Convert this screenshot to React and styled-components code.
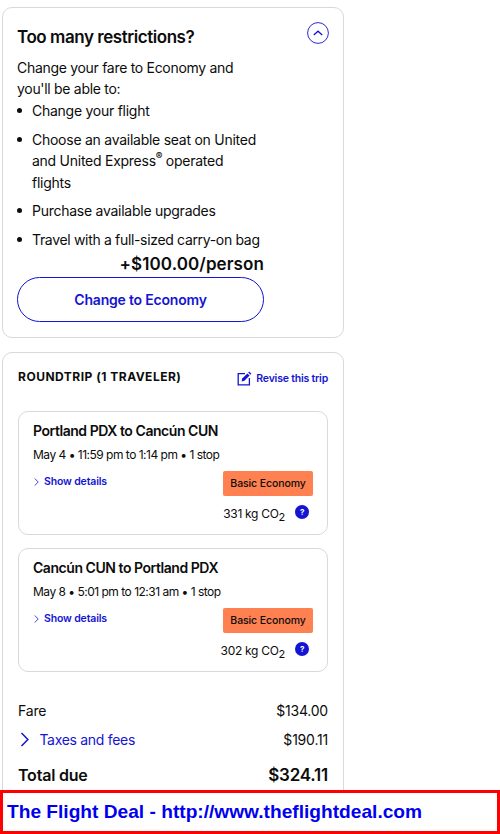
import React from 'react'
import styled, { createGlobalStyle } from 'styled-components'

const GlobalStyle = createGlobalStyle`
  html, body {
    margin: 0;
    height: 834px;
    overflow: hidden;
    background: #fff;
  }
  body {
    font-family: Inter, "Liberation Sans", sans-serif;
    color: #0c0c0c;
  }
`

function ChevronUpCircle() {
  return (
    <svg width="22" height="22" viewBox="0 0 22 22" fill="none" stroke="#1414d2">
      <circle cx="11" cy="11" r="10.4" strokeWidth="0.9" />
      <path d="M6.8 13 L11 9.2 L15.2 13" strokeWidth="1.3" />
    </svg>
  )
}

function EditIcon() {
  return (
    <svg width="15" height="15" viewBox="0 0 15 15" fill="none">
      <path d="M8 2.6H1.2v11.2h11.2V7" stroke="#1414d2" strokeWidth="1.3" />
      <path d="M4.6 10.4 L5.2 7.6 L10.4 2.4 L12.6 4.6 L7.4 9.8 Z" fill="#1414d2" />
      <path d="M11.2 1.6 L12.2 0.6 L14.4 2.8 L13.4 3.8 Z" fill="#1414d2" />
    </svg>
  )
}

function Chevron({ size = 8 }) {
  return (
    <svg width={size * 0.625} height={size} viewBox="0 0 5 8" fill="none" stroke="#1414d2" strokeWidth="0.8">
      <path d="M0.8 0.5 L4.2 4 L0.8 7.5" />
    </svg>
  )
}

function Flight({ route, times, co2 }) {
  return (
    <FlightCard>
      <Route>{route}</Route>
      <Times>{times}</Times>
      <FlightBottom>
        <DetailsLink><Chevron />Show details</DetailsLink>
        <FareColumn>
          <FareBadge>Basic Economy</FareBadge>
          <Emissions>
            <span>{co2} kg CO<Sub>2</Sub></span>
            <HelpDot>?</HelpDot>
          </Emissions>
        </FareColumn>
      </FlightBottom>
    </FlightCard>
  )
}

export default function App() {
  return (
    <Page>
      <GlobalStyle />
      <Card>
        <UpsellHead>
          <UpsellTitle>Too many restrictions?</UpsellTitle>
          <ChevronUpCircle />
        </UpsellHead>
        <Intro>Change your fare to Economy and<br />you'll be able to:</Intro>
        <Perks>
          <li>Change your flight</li>
          <li>Choose an available seat on United<br />and United Express<Reg>®</Reg> operated<br />flights</li>
          <li>Purchase available upgrades</li>
          <li>Travel with a full-sized carry-on bag</li>
        </Perks>
        <UpsellAction>
          <Price>+$100.00/person</Price>
          <PillButton>Change to Economy</PillButton>
        </UpsellAction>
      </Card>

      <TripCard>
        <TripHead>
          <TripTitle>ROUNDTRIP (1 TRAVELER)</TripTitle>
          <ReviseLink><EditIcon />Revise this trip</ReviseLink>
        </TripHead>
        <Flight route="Portland PDX to Cancún CUN" times="May 4 • 11:59 pm to 1:14 pm • 1 stop" co2="331" />
        <Flight route="Cancún CUN to Portland PDX" times="May 8 • 5:01 pm to 12:31 am • 1 stop" co2="302" />
        <Totals>
          <TotalRow><span>Fare</span><span>$134.00</span></TotalRow>
          <TotalRow>
            <TaxesLink><Chevron size={15} />Taxes and fees</TaxesLink>
            <span>$190.11</span>
          </TotalRow>
          <GrandRow><span>Total due</span><strong>$324.11</strong></GrandRow>
        </Totals>
      </TripCard>

      <Banner>The Flight Deal - http://www.theflightdeal.com</Banner>
    </Page>
  )
}

const Page = styled.div`
  width: 342px;
  height: 834px;
  padding: 7px 0 0 2px;
  box-sizing: content-box;
`
const Card = styled.section`
  box-sizing: border-box;
  height: 331px;
  padding: 14px 14px 0 14px;
  border: 1px solid #d9d9d9;
  border-radius: 10px;
  background: #fff;
`
const UpsellHead = styled.div`
  display: flex;
  justify-content: space-between;
  align-items: flex-start;
  height: 35px;
`
const UpsellTitle = styled.h2`
  margin: 4px 0 0;
  font-size: 17px;
  line-height: 22px;
  font-weight: 600;
  letter-spacing: -0.45px;
`
const Intro = styled.p`
  margin: 0 0 1px;
  font-size: 14px;
  line-height: 21px;
  letter-spacing: -0.3px;
`
const Perks = styled.ul`
  margin: 0;
  padding: 0 0 0 15px;
  list-style: none;
  font-size: 14px;
  line-height: 21.5px;
  letter-spacing: -0.26px;
  li {
    position: relative;
    margin-bottom: 7.2px;
  }
  li::before {
    content: '';
    position: absolute;
    left: -15px;
    top: 8px;
    width: 5px;
    height: 5px;
    border-radius: 50%;
    background: #0c0c0c;
  }
  li:last-child {
    margin-bottom: 0;
    letter-spacing: -0.33px;
  }
`
const Reg = styled.sup`
  font-size: 10px;
  font-weight: 600;
  line-height: 0;
`
const UpsellAction = styled.div`
  width: 247px;
  margin-top: 1px;
  display: flex;
  flex-direction: column;
  align-items: flex-end;
`
const Price = styled.div`
  font-size: 17px;
  line-height: 25px;
  font-weight: 600;
  letter-spacing: 0.1px;
`
const PillButton = styled.button`
  width: 100%;
  height: 45px;
  border: 1px solid #1414d2;
  border-radius: 23px;
  background: #fff;
  color: #1414d2;
  font-family: inherit;
  font-size: 14px;
  font-weight: 600;
  letter-spacing: -0.2px;
`
const TripCard = styled(Card)`
  height: 520px;
  margin-top: 14px;
  padding: 15px 15px 0;
`
const TripHead = styled.div`
  display: flex;
  justify-content: space-between;
  align-items: center;
  height: 20px;
  margin-bottom: 23px;
`
const TripTitle = styled.h3`
  margin: 0 0 4px;
  font-size: 12px;
  font-weight: 700;
  letter-spacing: 0.5px;
`
const ReviseLink = styled.a`
  display: flex;
  align-items: center;
  gap: 4px;
  color: #1414d2;
  font-size: 10.5px;
  font-weight: 600;
  letter-spacing: -0.2px;
`
const FlightCard = styled.article`
  box-sizing: border-box;
  height: 124px;
  margin-bottom: 13px;
  padding: 9px 14px 0 14px;
  border: 1px solid #d9d9d9;
  border-radius: 10px;
`
const Route = styled.div`
  font-size: 14px;
  line-height: 20px;
  font-weight: 600;
  letter-spacing: -0.45px;
`
const Times = styled.div`
  margin-top: 5px;
  font-size: 12px;
  line-height: 18px;
  letter-spacing: -0.5px;
`
const FlightBottom = styled.div`
  display: flex;
  justify-content: space-between;
  align-items: flex-start;
  margin-top: 7px;
`
const DetailsLink = styled.a`
  display: flex;
  align-items: center;
  gap: 5px;
  margin: 3px 0 0 1px;
  color: #1414d2;
  font-size: 10.5px;
  line-height: 16px;
  font-weight: 600;
  letter-spacing: -0.15px;
`
const FareColumn = styled.div`
  display: flex;
  flex-direction: column;
  align-items: flex-end;
`
const FareBadge = styled.div`
  width: 90px;
  height: 25px;
  border-radius: 2px;
  background: #ff8050;
  color: #0c0c0c;
  font-size: 10.5px;
  font-weight: 500;
  line-height: 26px;
  letter-spacing: -0.1px;
  text-align: center;
`
const Emissions = styled.div`
  display: flex;
  align-items: flex-start;
  gap: 10px;
  margin: 9px 4px 0 0;
  font-size: 12px;
  line-height: 17px;
  letter-spacing: -0.3px;
`
const Sub = styled.sub`
  font-size: 11px;
  line-height: 0;
`
const HelpDot = styled.span`
  width: 14px;
  height: 14px;
  border-radius: 50%;
  background: #1414d2;
  color: #fff;
  font-size: 8px;
  font-weight: 700;
  line-height: 14px;
  text-align: center;
`
const Totals = styled.div`
  margin-top: 24px;
  font-size: 14px;
  letter-spacing: -0.2px;
`
const TotalRow = styled.div`
  display: flex;
  justify-content: space-between;
  align-items: center;
  height: 29px;
`
const TaxesLink = styled.a`
  display: flex;
  align-items: center;
  gap: 10px;
  padding-left: 2px;
  color: #1414d2;
  letter-spacing: -0.3px;
`
const GrandRow = styled(TotalRow)`
  height: 42px;
  font-size: 16px;
  font-weight: 600;
  strong {
    font-size: 17px;
    font-weight: 600;
  }
`
const Banner = styled.div`
  position: fixed;
  left: 0;
  bottom: 0;
  width: 500px;
  height: 44px;
  box-sizing: border-box;
  padding-left: 4px;
  border: 3px solid #f00;
  background: #fff;
  color: #0000ee;
  font-family: "Liberation Sans", sans-serif;
  font-size: 19.15px;
  font-weight: 700;
  line-height: 38px;
`
